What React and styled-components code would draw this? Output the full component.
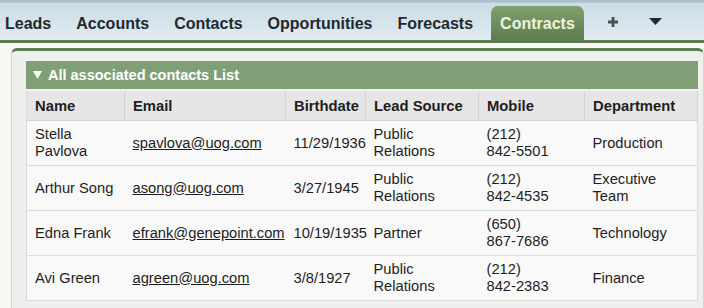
import React from 'react'
import styled, { createGlobalStyle } from 'styled-components'

const GlobalStyle = createGlobalStyle`
  html, body {
    margin: 0;
    padding: 0;
    background: #f6f7f3;
    font-family: "Liberation Sans", Arial, sans-serif;
    overflow: hidden;
  }
`

const Page = styled.div`
  width: 704px;
  height: 308px;
  overflow: hidden;
  background: #f7f8f4;
`

const TabBar = styled.div`
  height: 40px;
  display: flex;
  align-items: flex-end;
  background: linear-gradient(#a9bfcc 0, #a9bfcc 2px, #c9dbe5 3px, #e2ecf1 100%);
  border-bottom: 3px solid #5c7b50;
  margin-left: -5px;
  gap: 5px;
`

const Tab = styled.div`
  height: 34px;
  box-sizing: border-box;
  padding-top: 2px;
  display: flex;
  align-items: center;
  padding-left: ${p => (p.$active ? 9 : 10)}px;
  padding-right: ${p => (p.$active ? 9 : 10)}px;
  font-size: 16px;
  font-weight: bold;
  color: ${p => (p.$active ? '#eef4dc' : '#22292e')};
  border-radius: 7px 7px 0 0;
  background: ${p => (p.$active ? 'linear-gradient(#82a070, #5d7c4f)' : 'transparent')};
  margin-left: ${p => (p.$active ? '3px' : '0')};
`

const IconTab = styled.div`
  height: 34px;
  width: ${p => p.$w}px;
  display: flex;
  align-items: center;
  justify-content: center;
  padding-bottom: 3px;
  box-sizing: border-box;
`

const Panel = styled.div`
  margin: 5px 0 0 11px;
  height: 300px;
  background: #efefed;
  border-top: 3px solid #5f7d53;
  border-left: 1px solid #d6d6d2;
  border-right: 1px solid #d6d6d2;
  border-radius: 6px 6px 0 0;
  padding: 10px 5px 0 14px;
`

const SectionHead = styled.div`
  height: 28px;
  display: flex;
  align-items: center;
  gap: 6px;
  padding-left: 7px;
  background: #7f9f77;
  color: #ffffff;
  font-size: 14.5px;
  font-weight: bold;
`

const Table = styled.table`
  width: 671px;
  border-collapse: collapse;
  table-layout: fixed;
  font-size: 14.7px;
  color: #1e1e1e;
  background: #f9f9f9;
  border: 1px solid #d9d9d9;
  border-top: none;
`

const Th = styled.th`
  height: 29px;
  padding: 0 6px 0 8px;
  text-align: left;
  font-weight: bold;
  font-size: 14.8px;
  white-space: nowrap;
  background: #e6e6e6;
  border-right: 1px solid #d3d3d3;
  border-bottom: 1px solid #d3d3d3;
  border-top: 2px solid #f1f1f1;
`

const Td = styled.td`
  height: 44px;
  padding: 0 3px 0 8px;
  border-bottom: 1px solid #dcdcdc;
  line-height: 17px;
  vertical-align: middle;
`

const Mail = styled.span`
  color: #1e1e1e;
  text-decoration: underline;
`

const NoWrap = styled.span`
  white-space: nowrap;
`

const cols = [
  ['Name', 98],
  ['Email', 161],
  ['Birthdate', 80],
  ['Lead Source', 113],
  ['Mobile', 106],
  ['Department', 113],
]

const rows = [
  ['Stella Pavlova', 'spavlova@uog.com', '11/29/1936', 'Public Relations', '(212)', '842-5501', 'Production'],
  ['Arthur Song', 'asong@uog.com', '3/27/1945', 'Public Relations', '(212)', '842-4535', 'Executive Team'],
  ['Edna Frank', 'efrank@genepoint.com', '10/19/1935', 'Partner', '(650)', '867-7686', 'Technology'],
  ['Avi Green', 'agreen@uog.com', '3/8/1927', 'Public Relations', '(212)', '842-2383', 'Finance'],
]

const tabs = ['Leads', 'Accounts', 'Contacts', 'Opportunities', 'Forecasts']

export default function App() {
  return (
    <Page>
      <GlobalStyle />
      <TabBar>
        {tabs.map(t => (
          <Tab key={t}>{t}</Tab>
        ))}
        <Tab $active>Contracts</Tab>
        <IconTab $w={48}>
          <svg width="10" height="10" viewBox="0 0 10 10">
            <path d="M3.6 0h2.8v3.6H10v2.8H6.4V10H3.6V6.4H0V3.6h3.6z" fill="#4a4f52" />
          </svg>
        </IconTab>
        <IconTab $w={28}>
          <svg width="13" height="7" viewBox="0 0 13 7">
            <path d="M0 0h13L6.5 7z" fill="#22292e" />
          </svg>
        </IconTab>
      </TabBar>
      <Panel>
        <SectionHead>
          <svg width="9" height="8" viewBox="0 0 9 8">
            <path d="M0 0h9L4.5 8z" fill="#ffffff" />
          </svg>
          All associated contacts List
        </SectionHead>
        <Table>
          <colgroup>
            {cols.map(([c, w]) => (
              <col key={c} style={{ width: w }} />
            ))}
          </colgroup>
          <thead>
            <tr>
              {cols.map(([c]) => (
                <Th key={c}>{c}</Th>
              ))}
            </tr>
          </thead>
          <tbody>
            {rows.map(r => (
              <tr key={r[0]}>
                <Td>{r[0]}</Td>
                <Td><Mail>{r[1]}</Mail></Td>
                <Td>{r[2]}</Td>
                <Td>{r[3]}</Td>
                <Td>{r[4]} <NoWrap>{r[5]}</NoWrap></Td>
                <Td>{r[6]}</Td>
              </tr>
            ))}
          </tbody>
        </Table>
      </Panel>
    </Page>
  )
}
